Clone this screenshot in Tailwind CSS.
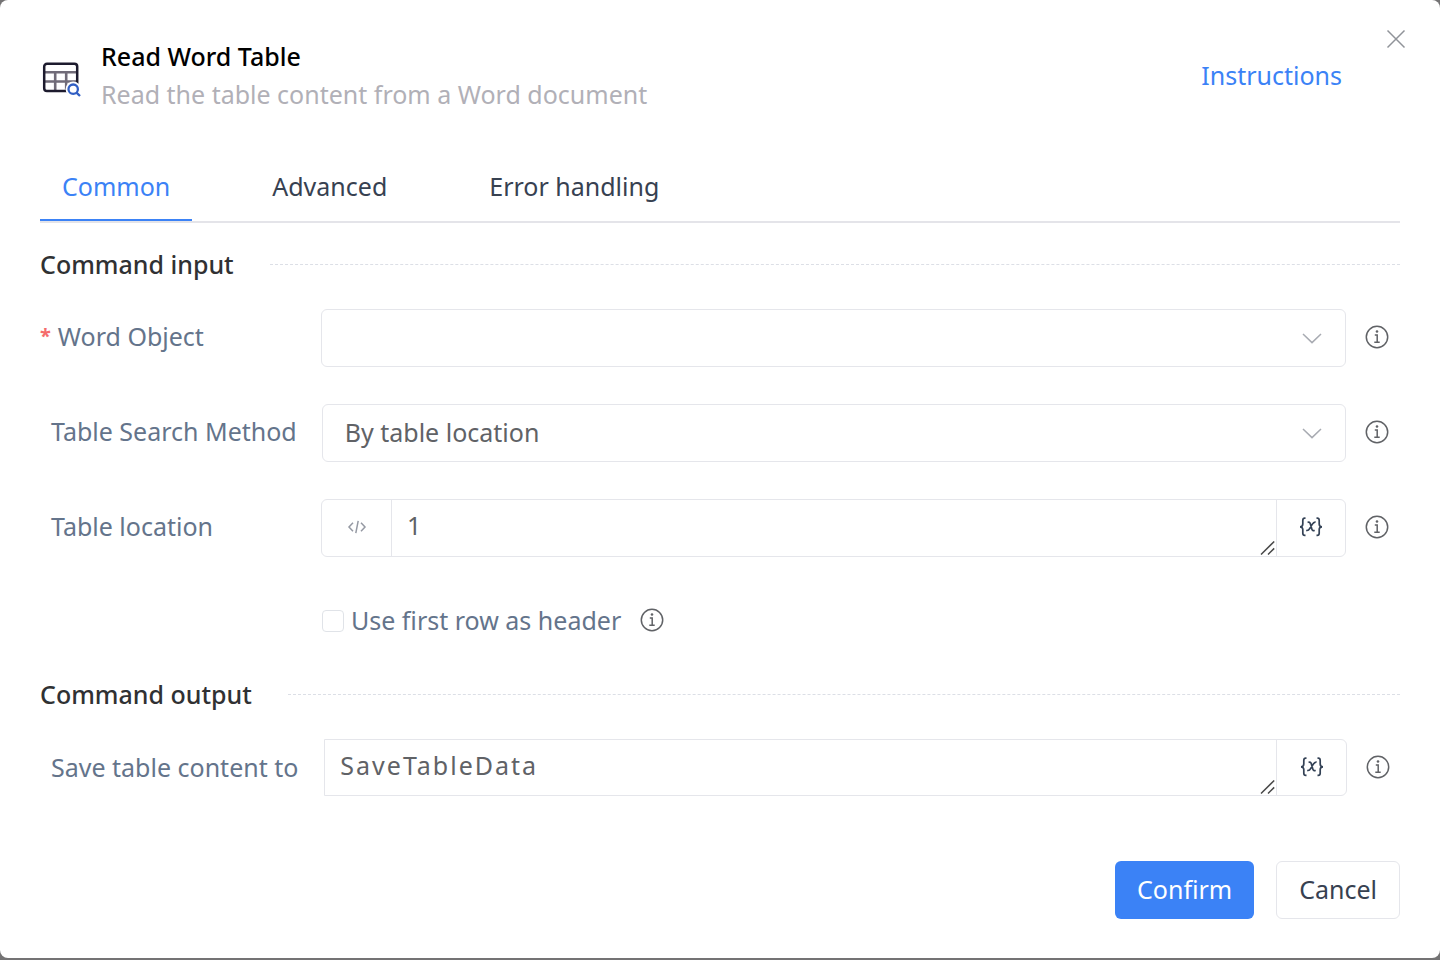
<!DOCTYPE html>
<html lang="en">
<head>
<meta charset="UTF-8">
<meta name="viewport" content="width=device-width, initial-scale=1.0">
<title>Read Word Table</title>
<script src="https://cdn.jsdelivr.net/npm/@tailwindcss/browser@4"></script>
<style>
  body {
    font-family: 'Noto Sans', 'Open Sans', sans-serif;
  }
</style>
</head>
<body class="bg-[#747374] pb-[2px] text-[25px] leading-[38px] text-[#64748b]">

  <!-- shared icons -->
  <svg class="hidden">
    <symbol id="info" viewBox="0 0 24 24">
      <g fill="none" stroke="#606266" stroke-width="1.5">
        <circle cx="12" cy="12" r="10.7" />
        <path d="M9.8 9.9h2.4v7.2M9.3 17.2h5.4" />
      </g>
      <circle cx="12" cy="6.5" r="1.3" fill="#606266" />
    </symbol>
    <symbol id="chevron" viewBox="0 0 20 11">
      <path d="M1 1l9 8.6L19 1" fill="none" stroke="#a8abb2" stroke-width="1.5" />
    </symbol>
    <symbol id="variable" viewBox="0 0 24 20">
      <g fill="none" stroke="#334155" stroke-width="1.7">
        <path d="M6.5 1.2H5.8Q3.8 1.2 3.8 3.4V7Q3.8 9.8 1 9.8Q3.8 9.8 3.8 12.6V16.2Q3.8 18.4 5.8 18.4H6.5" />
        <path d="M17.5 1.2H18.2Q20.2 1.2 20.2 3.4V7Q20.2 9.8 23 9.8Q20.2 9.8 20.2 12.6V16.2Q20.2 18.4 18.2 18.4H17.5" />
        <path d="M8.6 5.4Q10.6 4.4 11.3 6.8L12.8 12Q13.5 14.4 15.6 13.2M16.6 5.2Q14.8 4.8 13.2 7.4L10.8 11.4Q9.4 14 7.2 13.4" />
      </g>
    </symbol>
    <symbol id="grip" viewBox="0 0 15 14">
      <path d="M1 13.5L14.2 .5M8 13.5L14.2 7.4" fill="none" stroke="#4a4a4a" stroke-width="1.5" />
    </symbol>
  </svg>

  <form class="relative min-h-[calc(100vh-2px)] rounded-lg bg-white px-10 pt-[37px] pb-[39px]">
    <button type="button" aria-label="Close" class="absolute top-[29px] right-[34px]">
      <svg class="size-5" viewBox="0 0 20 20"><path d="M1.5 1.5l17 17M18.5 1.5l-17 17" stroke="#909399" stroke-width="1.5" /></svg>
    </button>

    <header class="flex items-center pr-[58px]">
      <svg class="mt-1.5 mr-5 h-[38px] w-[41px] shrink-0" viewBox="0 0 41 38">
        <g fill="none">
          <path d="M5 13.3H37M5 22.5H37M15.2 13V31M26.2 13V31" stroke="#706b78" stroke-width="2.6" />
          <rect x="4.2" y="4.7" width="33" height="27.4" rx="2.8" stroke="#1d1b2e" stroke-width="2.5" />
          <circle cx="33.2" cy="30.2" r="7.6" fill="#fff" />
          <circle cx="33.2" cy="30.2" r="4.7" stroke="#315fc4" stroke-width="2.3" />
          <path d="M36.5 33.6L40 37" stroke="#315fc4" stroke-width="2.4" />
        </g>
      </svg>
      <div class="flex-1">
        <h1 class="font-medium text-black">Read Word Table</h1>
        <p class="text-[#b1b0b7]">Read the table content from a Word document</p>
      </div>
      <a href="#" class="text-[#3b82f6]">Instructions</a>
    </header>

    <nav class="mt-[39px] flex gap-[58px] border-b-2 border-[#e4e4e9] text-[#374151]">
      <button type="button" class="border-b-2 border-[#3b82f6] px-[22px] pt-[15px] pb-[14px] text-[#3b82f6]">Common</button>
      <button type="button" class="border-b-2 border-transparent px-[22px] pt-[15px] pb-[14px]">Advanced</button>
      <button type="button" class="border-b-2 border-transparent px-[22px] pt-[15px] pb-[14px]">Error handling</button>
    </nav>

    <h2 class="mt-[22px] flex items-center gap-9 font-medium text-[#303133]">Command input
      <span class="flex-1 border-t border-dashed border-[#dcdfe6]"></span>
    </h2>

    <div class="mt-[26px] flex flex-col gap-[37px] pr-[11px]">
      <div class="flex items-center">
        <label for="word-object" class="flex min-w-[281px] pr-[25px] pb-1"><span class="mr-[7px] text-xl leading-[38px] font-bold text-[#f56c6c]">*</span>Word Object</label>
        <div class="relative flex-1">
          <select id="word-object" class="block h-[58px] w-full appearance-none rounded-md border border-[#e5e6eb] bg-white px-[22px] pb-[2px] text-[#606266]">
            <option></option>
          </select>
          <svg class="pointer-events-none absolute top-6 right-6 h-[11px] w-5"><use href="#chevron" /></svg>
        </div>
        <svg class="mb-[2px] ml-[19px] size-6"><use href="#info" /></svg>
      </div>

      <div class="flex items-center">
        <label for="search-method" class="min-w-[281px] pr-[25px] pb-1 pl-[11px]">Table Search Method</label>
        <div class="relative flex-1">
          <select id="search-method" class="block h-[58px] w-full appearance-none rounded-md border border-[#e5e6eb] bg-white px-[22px] pb-[2px] text-[#606266]">
            <option>By table location</option>
          </select>
          <svg class="pointer-events-none absolute top-6 right-6 h-[11px] w-5"><use href="#chevron" /></svg>
        </div>
        <svg class="mb-[2px] ml-[19px] size-6"><use href="#info" /></svg>
      </div>

      <div class="flex items-center">
        <label for="location" class="min-w-[281px] pr-[25px] pb-1 pl-[11px]">Table location</label>
        <div class="relative flex h-[58px] flex-1 rounded-md border border-[#e5e6eb]">
          <button type="button" aria-label="Expression" class="flex w-[70px] items-center justify-center border-r border-[#e5e6eb] pb-[2px]">
            <svg class="h-[14px] w-5" viewBox="0 0 20 14"><path d="M6 2.8L2 7l4 4.2M14 2.8L18 7l-4 4.2M11.2 .8L8.8 13.2" fill="none" stroke="#9599a3" stroke-width="1.5" /></svg>
          </button>
          <textarea id="location" rows="1" class="block min-w-0 flex-1 resize-none overflow-hidden px-[15px] py-1.5 text-[#606266]">1</textarea>
          <svg class="pointer-events-none absolute right-[70px] bottom-px h-[14px] w-[15px]"><use href="#grip" /></svg>
          <button type="button" aria-label="Insert variable" class="flex w-[69px] items-center justify-center border-l border-[#e5e6eb] pb-[2px]">
            <svg class="h-5 w-6"><use href="#variable" /></svg>
          </button>
        </div>
        <svg class="mb-[2px] ml-[19px] size-6"><use href="#info" /></svg>
      </div>

      <div class="flex h-[54px] items-center pl-[282px]">
        <input id="header-row" type="checkbox" class="size-[22px] appearance-none rounded-sm border border-[#e0e3e8] bg-white checked:bg-[#3b82f6]">
        <label for="header-row" class="ml-[7px] pb-[2px]">Use first row as header</label>
        <svg class="mb-[2px] ml-[19px] size-6"><use href="#info" /></svg>
      </div>
    </div>

    <h2 class="mt-[27px] flex items-center gap-9 font-medium text-[#303133]">Command output
      <span class="flex-1 border-t border-dashed border-[#dcdfe6]"></span>
    </h2>

    <div class="mt-[26px] flex items-center pr-[10px]">
      <label for="save-to" class="min-w-[281px] pr-[26px] pb-[2px] pl-[11px]">Save table content to</label>
      <div class="relative flex h-[57px] flex-1 rounded-r-md border border-[#e5e6eb]">
        <textarea id="save-to" rows="1" class="block min-w-0 flex-1 resize-none overflow-hidden px-[15px] py-1.5 tracking-[2px] text-[#606266]">SaveTableData</textarea>
        <svg class="pointer-events-none absolute right-[71px] bottom-px h-[14px] w-[15px]"><use href="#grip" /></svg>
        <button type="button" aria-label="Insert variable" class="flex w-[70px] items-center justify-center border-l border-[#e5e6eb] pb-[2px]">
          <svg class="h-5 w-6"><use href="#variable" /></svg>
        </button>
      </div>
      <svg class="mb-[2px] ml-[19px] size-6"><use href="#info" /></svg>
    </div>

    <footer class="mt-[65px] flex justify-end gap-[22px]">
      <button type="submit" class="h-[58px] rounded-md bg-[#3b82f6] px-[22px] pb-[2px] text-white">Confirm</button>
      <button type="button" class="h-[58px] rounded-md border border-[#e5e6eb] px-[22px] pb-[2px] text-[#374151]">Cancel</button>
    </footer>
  </form>
</body>
</html>
